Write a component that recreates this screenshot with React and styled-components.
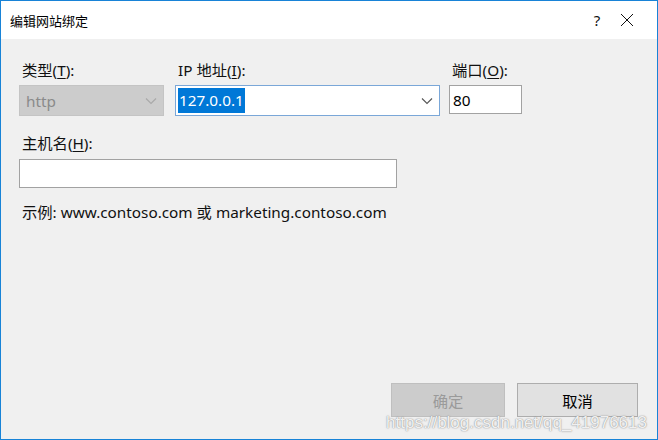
import React from "react";
import styled, { createGlobalStyle } from "styled-components";

const GlobalStyle = createGlobalStyle`
  html, body {
    margin: 0;
    padding: 0;
    background: #ffffff;
  }
  body {
    font-family: "Noto Sans", "Noto Sans CJK SC", sans-serif;
  }
`;

const Window = styled.div`
  position: relative;
  box-sizing: border-box;
  width: 658px;
  height: 440px;
  border: 1px solid #1883d7;
  background: #f0f0f0;
  display: flex;
  flex-direction: column;
`;

const TitleBar = styled.div`
  height: 38px;
  flex: none;
  background: #ffffff;
  display: flex;
  align-items: center;
  padding-left: 9px;
`;

const Title = styled.div`
  flex: 1;
  font-size: 13px;
  color: #000;
  padding-top: 1px;
`;

const TitleButton = styled.div`
  width: 30px;
  height: 38px;
  display: flex;
  align-items: center;
  justify-content: center;
  font-size: 15px;
  color: #111;
  margin-right: ${({ $mr }) => $mr || 0}px;
`;

const Body = styled.div`
  flex: 1;
  display: flex;
  flex-direction: column;
  padding: 21px 18px 0 18px;
  font-size: 15.3px;
  color: #111;
`;

const TopRow = styled.div`
  display: flex;
  align-items: flex-start;
`;

const Field = styled.div`
  display: flex;
  flex-direction: column;
  width: ${({ $w }) => $w}px;
  margin-left: ${({ $ml }) => $ml || 0}px;
`;

const Label = styled.div`
  height: 20px;
  line-height: 20px;
  margin-left: 3px;
  margin-bottom: ${({ $mb }) => $mb || 5}px;
  white-space: nowrap;
`;

const Key = styled.span`
  text-decoration: underline;
  text-underline-offset: 2px;
`;

const Combo = styled.div`
  box-sizing: border-box;
  height: 31px;
  display: flex;
  align-items: center;
  padding: 0 6px 0 2px;
  background: ${({ $disabled }) => ($disabled ? "#cccccc" : "#ffffff")};
  border: 1px solid ${({ $disabled }) => ($disabled ? "#c4c4c4" : "#7aa7d8")};
  color: ${({ $disabled }) => ($disabled ? "#8a8a8a" : "#000")};
`;

const ComboText = styled.div`
  flex: 1;
  padding-left: ${({ $pl }) => $pl || 0}px;
`;

const Selected = styled.span`
  background: #0078d7;
  color: #ffffff;
  display: inline-block;
  height: 25px;
  line-height: 25px;
  padding: 0 1px;
`;

const Arrow = ({ color }) => (
  <svg width="12" height="8" viewBox="0 0 12 8">
    <path d="M1 1.5 L6 6.5 L11 1.5" fill="none" stroke={color} strokeWidth="1.1" />
  </svg>
);

const TextInput = styled.div`
  box-sizing: border-box;
  width: ${({ $w }) => $w}px;
  height: 29px;
  background: #ffffff;
  border: 1px solid #a2a2a2;
  display: flex;
  align-items: center;
  padding-left: 3px;
  color: #000;
`;

const HostSection = styled.div`
  margin-top: 17px;
  display: flex;
  flex-direction: column;
`;

const Example = styled.div`
  margin-top: 14px;
  margin-left: 3px;
  height: 20px;
  line-height: 20px;
`;

const Spacer = styled.div`
  flex: 1;
`;

const ButtonRow = styled.div`
  display: flex;
  justify-content: flex-end;
  gap: 12px;
  padding-right: 1px;
  margin-bottom: 22px;
`;

const Button = styled.div`
  box-sizing: border-box;
  width: ${({ $w }) => $w}px;
  height: 34px;
  display: flex;
  align-items: center;
  justify-content: center;
  background: ${({ $disabled }) => ($disabled ? "#cccccc" : "#e1e1e1")};
  border: 1px solid ${({ $disabled }) => ($disabled ? "#bfbfbf" : "#adadad")};
  color: ${({ $disabled }) => ($disabled ? "#9a9a9a" : "#000")};
`;

const Watermark = styled.div`
  position: absolute;
  right: 10px;
  bottom: 6px;
  font-family: "Liberation Sans", Arial, sans-serif;
  font-size: 17px;
  color: rgba(255, 255, 255, 0.9);
  text-shadow: 0 0 1px rgba(120, 120, 120, 0.9), 0 0 2px rgba(150, 150, 150, 0.6);
  pointer-events: none;
`;

export default function App() {
  return (
    <>
      <GlobalStyle />
      <Window>
        <TitleBar>
          <Title>编辑网站绑定</Title>
          <TitleButton>?</TitleButton>
          <TitleButton $mr={15}>
            <svg width="14" height="14" viewBox="0 0 14 14">
              <path d="M1 1 L13 13 M13 1 L1 13" stroke="#111" strokeWidth="1" />
            </svg>
          </TitleButton>
        </TitleBar>
        <Body>
          <TopRow>
            <Field $w={145}>
              <Label>
                类型(<Key>T</Key>):
              </Label>
              <Combo $disabled>
                <ComboText $pl={4}>http</ComboText>
                <Arrow color="#a8a8a8" />
              </Combo>
            </Field>
            <Field $w={265} $ml={11}>
              <Label>
                IP 地址(<Key>I</Key>):
              </Label>
              <Combo>
                <ComboText>
                  <Selected>127.0.0.1</Selected>
                </ComboText>
                <Arrow color="#555" />
              </Combo>
            </Field>
            <Field $w={73} $ml={9}>
              <Label>
                端口(<Key>O</Key>):
              </Label>
              <TextInput $w={73}>80</TextInput>
            </Field>
          </TopRow>
          <HostSection>
            <Label $mb={6}>
              主机名(<Key>H</Key>):
            </Label>
            <TextInput $w={378} />
          </HostSection>
          <Example>示例: www.contoso.com 或 marketing.contoso.com</Example>
          <Spacer />
          <ButtonRow>
            <Button $w={114} $disabled>
              确定
            </Button>
            <Button $w={121}>取消</Button>
          </ButtonRow>
        </Body>
        <Watermark>https://blog.csdn.net/qq_41976613</Watermark>
      </Window>
    </>
  );
}
